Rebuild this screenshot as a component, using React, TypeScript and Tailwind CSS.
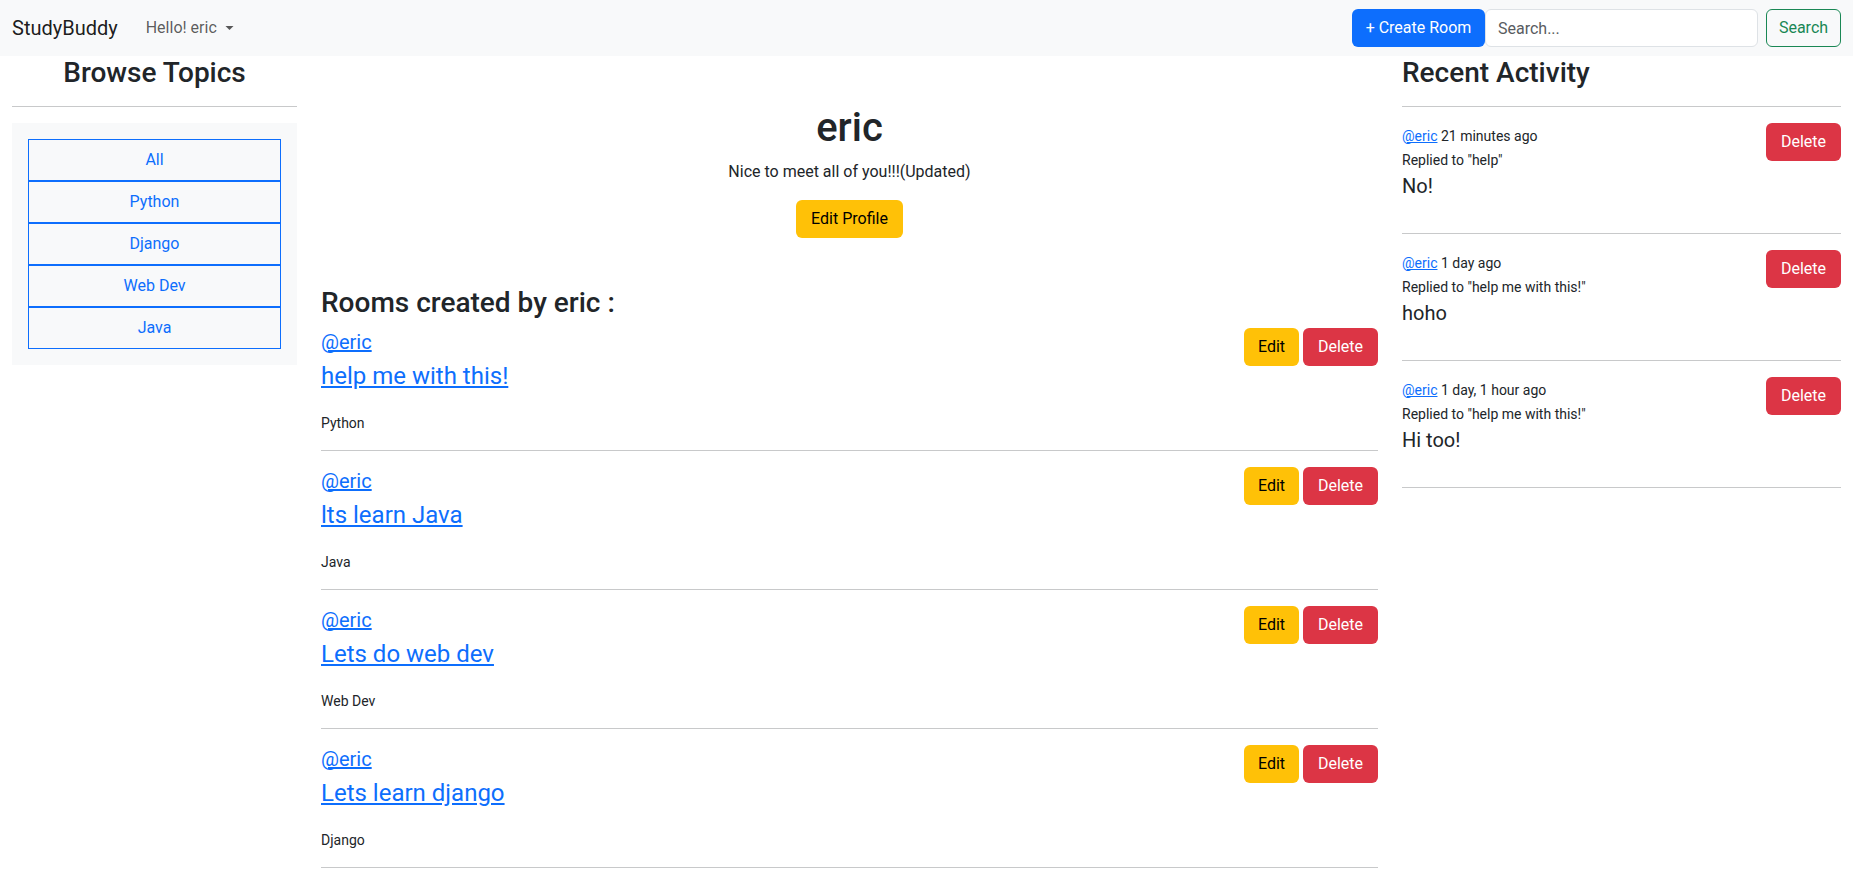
import React from "react";

const rooms = [
  { title: "help me with this!", topic: "Python" },
  { title: "lts learn Java", topic: "Java" },
  { title: "Lets do web dev", topic: "Web Dev" },
  { title: "Lets learn django", topic: "Django" },
];

const activities = [
  { time: "21 minutes ago", replied: 'Replied to "help"', body: "No!" },
  { time: "1 day ago", replied: 'Replied to "help me with this!"', body: "hoho" },
  { time: "1 day, 1 hour ago", replied: 'Replied to "help me with this!"', body: "Hi too!" },
];

const topics = ["All", "Python", "Django", "Web Dev", "Java"];

export default function App() {
  return (
    <div
      className="min-h-screen bg-white text-[#212529] text-base"
      style={{ fontFamily: "Roboto, 'Noto Sans', sans-serif" }}
    >
      <nav className="h-14 bg-[#f8f9fa] flex items-center px-3">
        <span className="text-xl text-black/90 leading-[30px]">StudyBuddy</span>
        <div className="ml-[28px] flex items-center text-black/65">
          <span>Hello! eric</span>
          <svg width="9" height="6" viewBox="0 0 9 6" className="ml-[8px]">
            <path d="M0.5 1 L8.5 1 L4.5 5 Z" fill="currentColor" />
          </svg>
        </div>
        <div className="ml-auto flex items-center">
          <button className="h-[38px] w-[133px] bg-[#0d6efd] text-white rounded-md">+ Create Room</button>
          <input
            className="h-[38px] w-[273px] bg-white border border-[#dee2e6] rounded-md px-3 outline-none placeholder:text-[#595c5f]"
            placeholder="Search..."
          />
          <button className="ml-2 h-[38px] w-[75px] border border-[#198754] text-[#198754] rounded-md">Search</button>
        </div>
      </nav>

      <div className="grid grid-cols-[285px_1fr_439px] gap-x-6 px-3">
        {/* Left */}
        <div>
          <h3 className="text-[28px] font-medium leading-[1.2] text-center">Browse Topics</h3>
          <div className="mt-4 border-t border-[#c8c9ca]" />
          <div className="mt-4 bg-[#f8f9fa] p-4">
            {topics.map((t) => (
              <div key={t} className="border border-[#0d6efd] py-2 leading-6 text-center text-[#0d6efd]">
                {t}
              </div>
            ))}
          </div>
        </div>

        {/* Middle */}
        <div>
          <div className="mt-12 flex flex-col items-center">
            <h1 className="text-[40px] font-medium leading-[48px]">eric</h1>
            <p className="mt-2 leading-6">Nice to meet all of you!!!(Updated)</p>
            <button className="mt-4 h-[38px] w-[107px] bg-[#ffc107] text-black rounded-md">Edit Profile</button>
          </div>
          <h3 className="mt-12 text-[28px] font-medium leading-[1.2] mb-2">Rooms created by eric :</h3>
          {rooms.map((r, i) => (
            <div key={r.title} className={`${i > 0 ? "pt-4" : ""} pb-4 border-b border-[#c8c9ca]`}>
              <div className="flex justify-between items-start">
                <div className="pt-[2px]">
                  <a className="block text-xl leading-6 text-[#0d6efd] underline">@eric</a>
                  <a className="block mt-2 text-2xl leading-[29px] text-[#0d6efd] underline">{r.title}</a>
                  <p className="mt-[22px] text-sm leading-[21px]">{r.topic}</p>
                </div>
                <div className="flex gap-1">
                  <button className="h-[38px] w-[55px] bg-[#ffc107] text-black rounded-md">Edit</button>
                  <button className="h-[38px] w-[75px] bg-[#dc3545] text-white rounded-md">Delete</button>
                </div>
              </div>
            </div>
          ))}
        </div>

        {/* Right */}
        <div>
          <h3 className="text-[28px] font-medium leading-[1.2]">Recent Activity</h3>
          <div className="mt-4 border-t border-[#c8c9ca]" />
          {activities.map((a) => (
            <div key={a.time} className="pt-4 pb-[35px] border-b border-[#c8c9ca]">
              <div className="flex justify-between items-start">
                <div className="pt-px">
                  <div className="text-sm leading-6">
                    <a className="text-[#0d6efd] underline">@eric</a> {a.time}
                  </div>
                  <div className="text-sm leading-6">{a.replied}</div>
                  <div className="mt-[2px] text-xl leading-6">{a.body}</div>
                </div>
                <button className="h-[38px] w-[75px] bg-[#dc3545] text-white rounded-md">Delete</button>
              </div>
            </div>
          ))}
        </div>
      </div>
    </div>
  );
}
